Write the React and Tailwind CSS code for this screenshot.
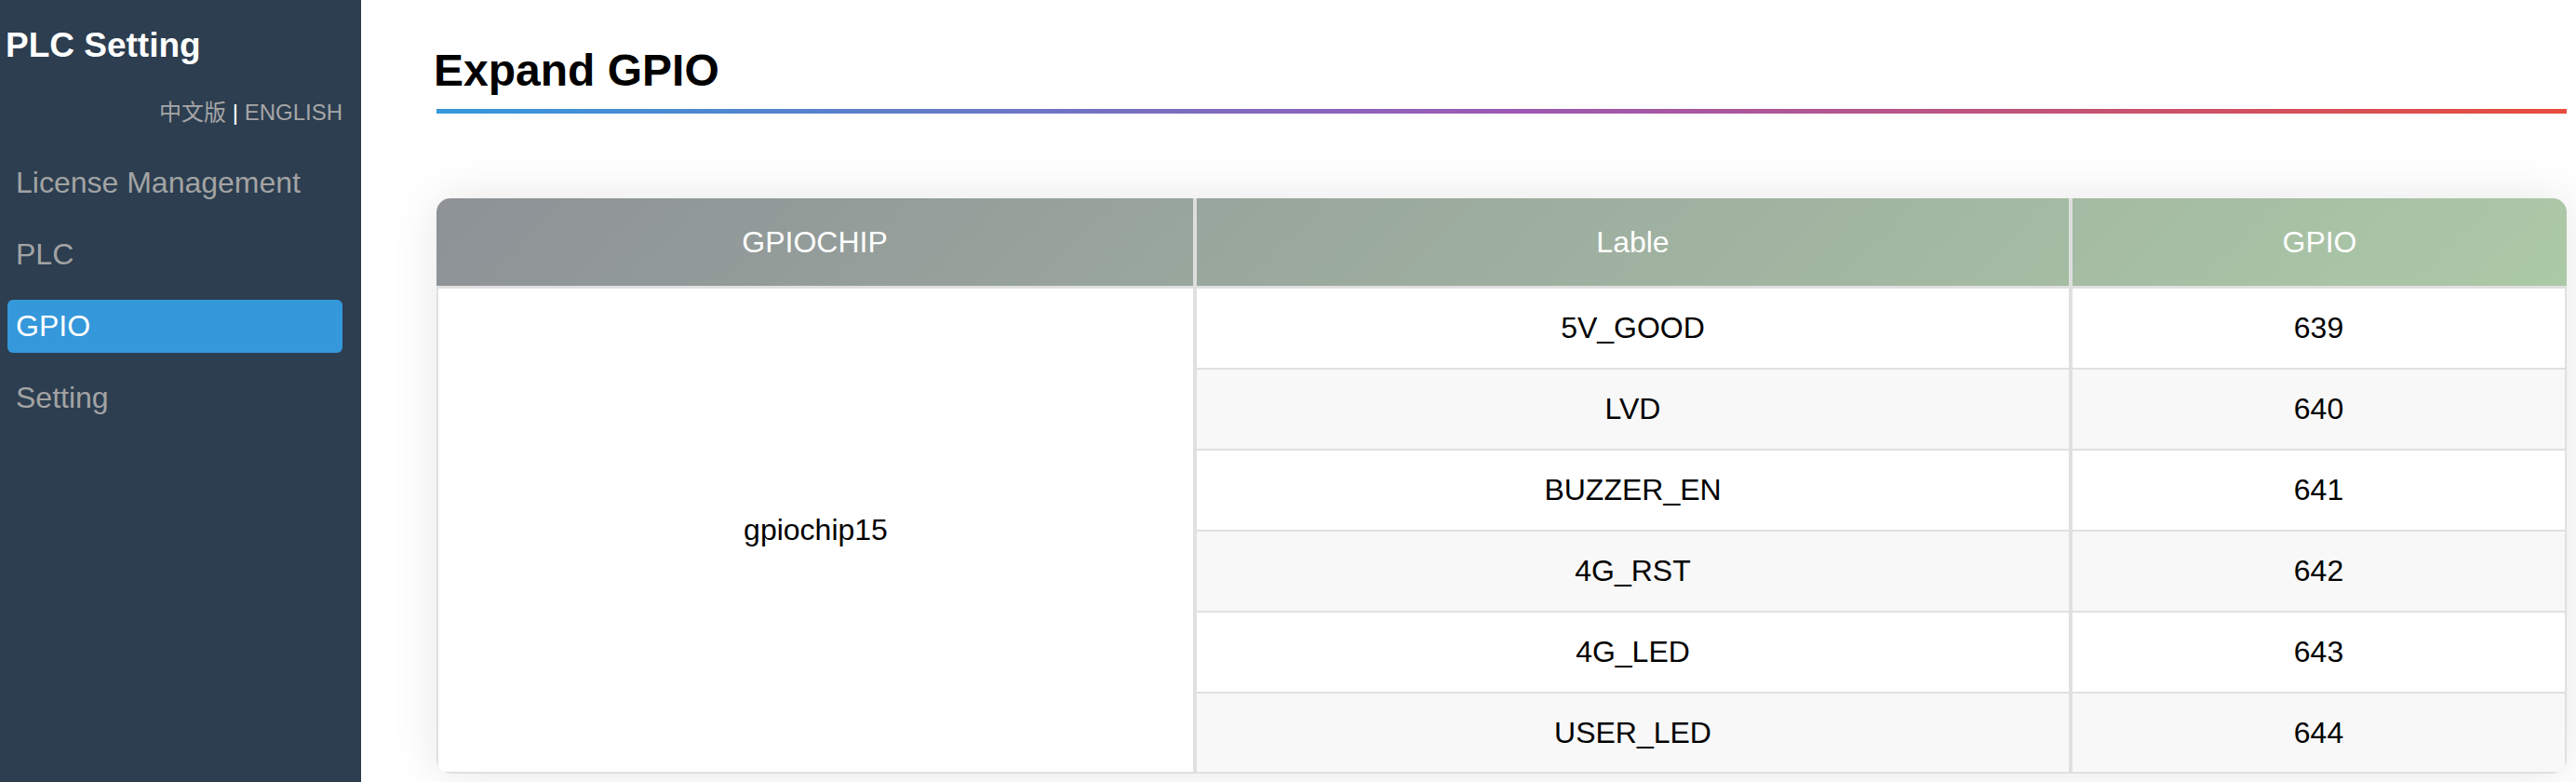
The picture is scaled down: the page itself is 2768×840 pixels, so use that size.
import React from "react";

const gpioRows = [
  { label: "5V_GOOD", gpio: 639 },
  { label: "LVD", gpio: 640 },
  { label: "BUZZER_EN", gpio: 641 },
  { label: "4G_RST", gpio: 642 },
  { label: "4G_LED", gpio: 643 },
  { label: "USER_LED", gpio: 644 },
];

const navItems = ["License Management", "PLC", "GPIO", "Setting"];

function Sidebar() {
  return (
    <aside className="w-[388px] shrink-0 bg-[#2c3e50] pt-[28px] pl-[8px] pr-[20px]">
      <h2 className="-ml-[2px] text-[37px] font-bold leading-[1.15] text-white">PLC Setting</h2>

      {/* language switch */}
      <div className="mt-[36px] text-right text-[24px] leading-[1.15] text-[#a6a6a6]">
        <span className="font-['Liberation_Sans','Noto_Sans_CJK_SC',sans-serif]">中文版</span>
        <span className="text-white"> | </span>
        <span>ENGLISH</span>
      </div>

      <nav className="mt-[34px] flex flex-col gap-[20px]">
        {navItems.map((item) => (
          <div
            key={item}
            className={
              item === "GPIO"
                ? "flex h-[57px] items-center rounded-[6px] bg-[#3498db] pl-[9px] text-[32px] leading-[1.15] text-white"
                : "flex h-[57px] items-center rounded-[6px] pl-[9px] text-[32px] leading-[1.15] text-[#a3a3a3]"
            }
          >
            {item}
          </div>
        ))}
      </nav>
    </aside>
  );
}

function GpioTable() {
  return (
    <div className="mt-[91px] overflow-hidden rounded-[15px] bg-white shadow-[0_0_50px_rgba(0,0,0,0.1)]">
      {/* header */}
      <div className="flex h-[97px] border-b-[3px] border-[#e0e0e0] bg-[linear-gradient(135deg,#8e9297,#acc9a7)] text-[32px] leading-[1.15] text-white">
        <div className="flex w-[813px] items-center justify-center">GPIOCHIP</div>
        <div className="w-[4px] bg-[#dedede]" />
        <div className="flex w-[937px] items-center justify-center">Lable</div>
        <div className="w-[4px] bg-[#dedede]" />
        <div className="flex flex-1 items-center justify-center">GPIO</div>
      </div>

      {/* body: chip cell spans all label rows */}
      <div className="flex rounded-b-[15px] border-x-2 border-b-2 border-[#e0e0e0] text-[32px] leading-[1.15] text-black">
        <div className="flex w-[811px] items-center justify-center bg-white">gpiochip15</div>
        <div className="w-[4px] bg-[#e0e0e0]" />
        <div className="flex flex-1 flex-col">
          {gpioRows.map((row, i) => (
            <div
              key={row.label}
              className={
                (i % 2 === 1 ? "bg-[#f8f8f8] " : "bg-white ") +
                (i < gpioRows.length - 1
                  ? "flex h-[87px] border-b-2 border-[#e0e0e0]"
                  : "flex h-[84px]")
              }
            >
              <div className="flex w-[937px] items-center justify-center">{row.label}</div>
              <div className="w-[4px] bg-[#e0e0e0]" />
              <div className="flex flex-1 items-center justify-center">{row.gpio}</div>
            </div>
          ))}
        </div>
      </div>
    </div>
  );
}

export default function App() {
  return (
    <div className="flex h-[840px] overflow-hidden bg-white font-['Liberation_Sans','Noto_Sans_CJK_SC',sans-serif]">
      <Sidebar />
      <main className="flex-1 pt-[48px] pl-[81px] pr-[10px]">
        <h1 className="-ml-[3px] text-[48px] font-bold leading-[1.15] text-black">Expand GPIO</h1>
        <div className="mt-[14px] h-[5px] bg-[linear-gradient(to_right,#3498db,#9b59b6,#e74c3c)]" />
        <GpioTable />
      </main>
    </div>
  );
}
